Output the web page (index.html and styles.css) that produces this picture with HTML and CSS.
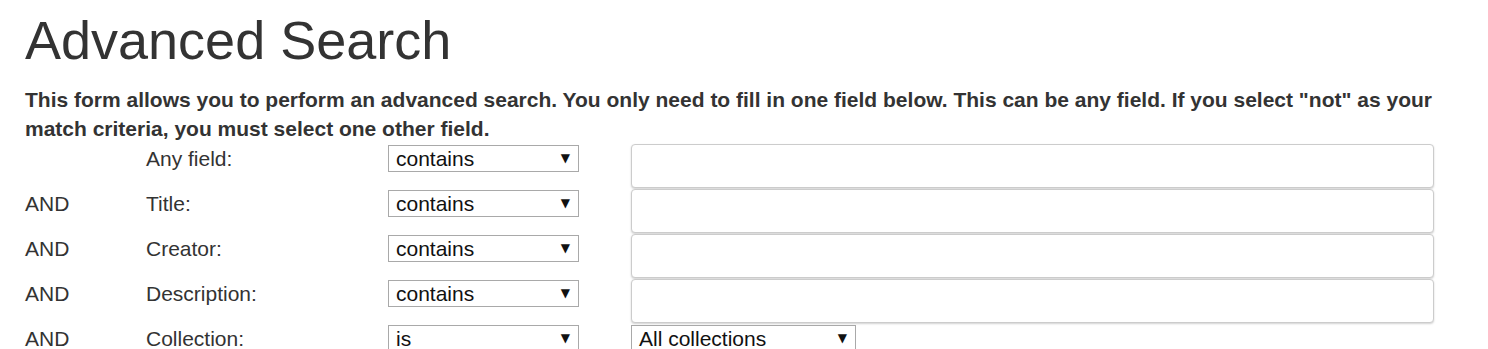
FILE: index.html
```html
<!DOCTYPE html>
<html lang="en">
<head>
<meta charset="utf-8">
<title>Advanced Search</title>
<link rel="stylesheet" href="styles.css">
</head>
<body>
<div class="page">
  <h1 class="title">Advanced Search</h1>
  <p class="intro">This form allows you to perform an advanced search. You only need to fill in one field below. This can be any field. If you select "not" as your match criteria, you must select one other field.</p>
  <div class="form">
    <div class="op"></div>
    <div class="label">Any field:</div>
    <div class="select"><span>contains</span><span class="arrow">▼</span></div>
    <div class="input"></div>

    <div class="op">AND</div>
    <div class="label">Title:</div>
    <div class="select"><span>contains</span><span class="arrow">▼</span></div>
    <div class="input"></div>

    <div class="op">AND</div>
    <div class="label">Creator:</div>
    <div class="select"><span>contains</span><span class="arrow">▼</span></div>
    <div class="input"></div>

    <div class="op">AND</div>
    <div class="label">Description:</div>
    <div class="select"><span>contains</span><span class="arrow">▼</span></div>
    <div class="input"></div>

    <div class="op">AND</div>
    <div class="label">Collection:</div>
    <div class="select"><span>is</span><span class="arrow">▼</span></div>
    <div class="select select-wide"><span>All collections</span><span class="arrow">▼</span></div>
  </div>
</div>
</body>
</html>
```
FILE: styles.css
```css
html, body {
  margin: 0;
  padding: 0;
  background: #fff;
}
body {
  font-family: "Liberation Sans", Arial, sans-serif;
  color: #333;
}
.page {
  padding-left: 25px;
}
.title {
  margin: 10px 0 0 0;
  font-size: 54px;
  font-weight: 400;
  line-height: 61px;
  color: #333;
}
.intro {
  margin: 15px 0 0 0;
  font-size: 21px;
  font-weight: 700;
  line-height: 28.5px;
  color: #333;
  width: 1440px;
}
.form {
  margin-top: 1px;
  display: grid;
  grid-template-columns: 121px 242px 243px 803px;
  grid-auto-rows: 45px;
  align-items: start;
  font-size: 21px;
}
.op, .label {
  margin-top: 0;
  line-height: 27px;
  padding-top: 1px;
  color: #333;
}
.select {
  margin-top: 1px;
  box-sizing: border-box;
  width: 191px;
  height: 27px;
  border: 1px solid #a9a9a9;
  background: #fff;
  color: #111;
  display: flex;
  align-items: center;
  justify-content: space-between;
  padding: 0 8px 0 7px;
  line-height: 25px;
}
.select-wide {
  width: 225px;
}
.arrow {
  font-size: 12px;
  color: #111;
  font-family: "DejaVu Sans", sans-serif;
}
.input {
  box-sizing: border-box;
  height: 44px;
  border: 1px solid #ccc;
  border-radius: 4px;
  box-shadow: 0 1px 2px rgba(0, 0, 0, 0.18);
  background: #fff;
}
```
